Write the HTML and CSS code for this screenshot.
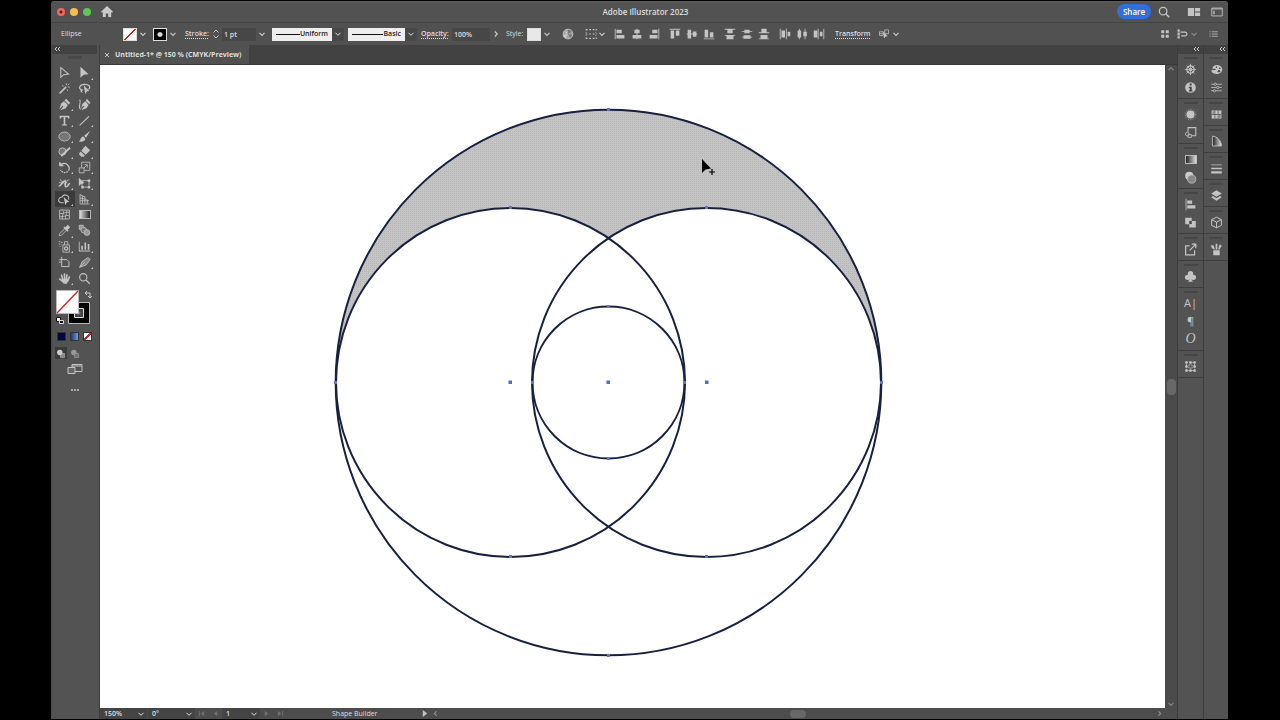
FILE: index.html
```
<!DOCTYPE html>
<html lang="en">
<head>
<meta charset="utf-8">
<title>Adobe Illustrator 2023</title>
<link rel="stylesheet" href="styles.css">
</head>
<body>
<svg class="defs" aria-hidden="true">
  <symbol id="chev" viewBox="0 0 8 8"><path d="M1.5 2.8 4 5.3 6.5 2.8" fill="none" stroke="currentColor" stroke-width="1.2"/></symbol>
  <symbol id="collapse" viewBox="0 0 8 8"><path d="M4 2 2 4l2 2M7 2 5 4l2 2" fill="none" stroke="currentColor"/></symbol>
</svg>
<div class="app">
  <header class="titlebar">
    <div class="title-left">
      <button class="light close" aria-label="Close"></button>
      <button class="light minimize" aria-label="Minimize"></button>
      <button class="light expand" aria-label="Expand"></button>
      <button class="home" aria-label="Home"><svg viewBox="0 0 12 12"><path fill="currentColor" d="M6 0 0 5.7 1 6.8l.8-.7V11h3V7.5h2.4V11h3V6.1l.8.7 1-1.1z"/></svg></button>
    </div>
    <h1 class="app-title">Adobe Illustrator 2023</h1>
    <div class="title-right">
      <button class="share">Share</button>
      <button class="icon" aria-label="Search"><svg viewBox="0 0 16 16" class="line"><circle cx="7" cy="7" r="4.3" stroke-width="1.5"/><path d="m10 10 4 4" stroke-width="1.7"/></svg></button>
      <button class="icon workspace" aria-label="Arrange documents"><svg viewBox="0 0 16 16" class="solid"><path d="M1 3.500h7v9H1zM9 3.500h6v4H9zM9 8.500h6v4H9z"/></svg></button>
      <button class="icon" aria-label="Switch workspace"><svg viewBox="0 0 16 16" class="line"><path d="M2 3.500h12v9H2zM2 4.500h12"/><path d="M4.500 6.500v4" stroke-width="1.5"/></svg></button>
    </div>
  </header>

  <div class="controls">
    <span class="kind">Ellipse</span>
    <button class="drop" aria-label="Fill"><i class="swatch none"></i><svg class="chev"><use href="#chev"/></svg></button>
    <button class="drop" aria-label="Stroke color"><i class="swatch ring"></i><svg class="chev"><use href="#chev"/></svg></button>
    <div class="field">
      <label class="weight-label linked" for="weight">Stroke:</label>
      <button class="stepper" aria-label="Step stroke weight"><svg viewBox="0 0 10 12" class="line"><path d="m2.5 4.500 2.500-2.500 2.500 2.500M2.500 7.500 5 10l2.500-2.500"/></svg></button>
      <input id="weight" class="weight" value="1 pt">
      <button class="drop" aria-label="Stroke weights"><svg class="chev"><use href="#chev"/></svg></button>
    </div>
    <select class="profile" aria-label="Width profile"><option>Uniform</option></select>
    <select class="profile brush" aria-label="Brush"><option>Basic</option></select>
    <div class="field">
      <label class="opacity-label linked" for="opacity">Opacity:</label>
      <input id="opacity" class="opacity" value="100%">
      <button class="drop" aria-label="Opacity options"><svg class="chev side"><use href="#chev"/></svg></button>
    </div>
    <div class="field">
      <span class="style-label">Style:</span>
      <button class="drop" aria-label="Graphic style"><i class="swatch plain"></i><svg class="chev"><use href="#chev"/></svg></button>
    </div>
    <button class="recolor" aria-label="Recolor artwork"><svg viewBox="0 0 16 16"><circle cx="8" cy="8" r="6" fill="#a2a2a2"/><path d="M8 8V2a6 6 0 0 1 5 3zM8 8l6 1a6 6 0 0 1-3 4z" fill="#777"/><path d="m8 8-6 1a6 6 0 0 0 3 4z" fill="#ccc"/><circle cx="8" cy="8" r="5.500" fill="none" stroke="#bbb"/><circle cx="6" cy="6" r="1" fill="#ddd"/></svg></button>
    <button class="drop align-to" aria-label="Align to"><svg viewBox="0 0 16 16" class="line"><path stroke-dasharray="2 2" d="M2 3h13M2 8h13M2 13h13" stroke-width="1.400"/><path stroke-dasharray="1 2" d="M2.500 3v10M13.500 3v10"/></svg><svg class="chev"><use href="#chev"/></svg></button>
    <div class="aligns">
      <button aria-label="Align left"><svg viewBox="0 0 16 16" class="solid"><path d="M2 2h1v12H2zM4 3h6v4H4zM4 9h9v4H4z"/></svg></button>
      <button aria-label="Align center"><svg viewBox="0 0 16 16" class="solid"><path d="M7.500 2h1v12h-1zM5 3h6v4H5zM3 9h10v4H3z"/></svg></button>
      <button aria-label="Align right"><svg viewBox="0 0 16 16" class="solid"><path d="M13 2h1v12h-1zM6 3h6v4H6zM3 9h9v4H3z"/></svg></button>
    </div>
    <div class="aligns">
      <button aria-label="Align top"><svg viewBox="0 0 16 16" class="solid"><path d="M2 2h12v1H2zM3 4h4v9H3zM9 4h4v6H9z"/></svg></button>
      <button aria-label="Align middle"><svg viewBox="0 0 16 16" class="solid"><path d="M2 7.500h12v1H2zM3 3h4v10H3zM9 5h4v6H9z"/></svg></button>
      <button aria-label="Align bottom"><svg viewBox="0 0 16 16" class="solid"><path d="M2 13h12v1H2zM3 3h4v9H3zM9 6h4v6H9z"/></svg></button>
    </div>
    <div class="aligns">
      <button aria-label="Distribute top"><svg viewBox="0 0 16 16" class="solid"><path d="M2 2h12v1H2zM5 3h6v4H5zM2 9h12v1H2zM4 10h8v4H4z"/></svg></button>
      <button aria-label="Distribute middle"><svg viewBox="0 0 16 16" class="solid"><path d="M2 4.500h12v1H2zM5 3h6v4H5zM2 11h12v1H2zM4 9.500h8v4H4z"/></svg></button>
      <button aria-label="Distribute bottom"><svg viewBox="0 0 16 16" class="solid"><path d="M2 6h12v1H2zM5 2h6v4H5zM2 13h12v1H2zM4 9h8v4H4z"/></svg></button>
    </div>
    <div class="aligns">
      <button aria-label="Distribute left"><svg viewBox="0 0 16 16" class="solid"><path d="M2 2h1v12H2zM4 4h4v8H4zM9 2h1v12H9zM11 5.500h3v5h-3z"/></svg></button>
      <button aria-label="Distribute center"><svg viewBox="0 0 16 16" class="solid"><path d="M4.500 2h1v12h-1zM3 4h4v8H3zM11 2h1v12h-1zM9.500 5.500h4v5h-4z"/></svg></button>
      <button aria-label="Distribute right"><svg viewBox="0 0 16 16" class="solid"><path d="M6.500 2h1v12h-1zM2 4h4v8H2zM13 2h1v12h-1zM9 5.500h3v5H9z"/></svg></button>
    </div>
    <button class="transform linked">Transform</button>
    <button class="drop" aria-label="Isolate"><svg viewBox="0 0 16 16" class="glyph"><g class="line"><path d="M2 5h5v5H2zM2 7.500h5M9 2.500h5v5H9z"/></g><path class="solid" d="m7 5 6 6-3 .4L8 14z"/></svg><svg class="chev"><use href="#chev"/></svg></button>
    <div class="controls-end">
      <button aria-label="Grid view"><svg viewBox="0 0 16 16" class="solid"><path d="M3 3h4v4H3zM9 3h4v4H9zM3 9h4v4H3zM9 9h4v4H9z"/></svg></button>
      <button class="drop snap" aria-label="Snap options"><svg viewBox="0 0 16 16" class="glyph"><path class="solid" d="M2 2h3v3H2zM2 6h3v4H2zM2 11h3v3H2z"/><path class="line" stroke-width="1.500" d="M6 5.500h6a2 2 0 0 1 0 5H7"/></svg><svg class="chev"><use href="#chev"/></svg></button>
      <button aria-label="Bar menu"><svg viewBox="0 0 16 16" class="line"><path d="M5 5h8M5 8h8M5 11h8M2 5h1.500M2 8h1.500M2 11h1.500"/></svg></button>
    </div>
  </div>

  <div class="workspace-area">
    <aside class="tools">
      <div class="collapse"><svg><use href="#collapse"/></svg></div>
      <div class="grip"></div>
      <div class="tool-grid">
        <button aria-label="Selection"><svg viewBox="0 0 16 16" class="line"><path d="M3.500 2v12l3.500-3.300 6-.8z" stroke-width="1.300"/></svg></button>
        <button class="more" aria-label="Direct selection"><svg viewBox="0 0 16 16" class="solid"><path d="M3 1v13.500l4-3.700 6-.8z"/></svg></button>
        <button aria-label="Magic wand"><svg viewBox="0 0 16 16" class="line"><path d="m2 14 8-8" stroke-width="2"/><path d="m10 1.500.5 2.500M14.500 6.500 12 6M14 2l-2 2M5 4l2 1.500M11 9l1 2"/></svg></button>
        <button aria-label="Lasso"><svg viewBox="0 0 16 16"><path class="line" stroke-width="1.500" d="M6 10C-1 9 2 3 8 3s8 3 5 6M5 9c-3 2 0 3 0 4"/><path class="solid" d="m7 4 7 7-3 .5L9 15z"/></svg></button>
        <button class="more" aria-label="Pen"><svg viewBox="0 0 16 16"><path class="solid" d="M10 1 15 6l-2 2-5-5zM7.500 4l4.500 4.500-2.500 4L3 15l3.500-4.500L5.500 9.500 1.500 14 4 6.500z"/></svg></button>
        <button aria-label="Curvature"><svg viewBox="0 0 16 16"><path class="solid" d="M11 1 15.500 6l-2 1.500-4-4zM9 4l4 4.500-2.500 4L4 15l3.500-4.500L6.500 9.500 3.500 13 5.500 7z"/><path class="line" d="M2 2c3 4-3 8 1 12" stroke-width="1.300"/></svg></button>
        <button class="more" aria-label="Type"><svg viewBox="0 0 16 16" class="solid"><path d="M2 2h12v3.500h-1.500L12 4H9v8.500l2 .5v1H5v-1l2-.5V4H4l-.5 1.500H2z"/></svg></button>
        <button class="more" aria-label="Line segment"><svg viewBox="0 0 16 16" class="line"><path d="M2 14 13.500 3" stroke-width="1.400"/></svg></button>
        <button class="more" aria-label="Ellipse"><svg viewBox="0 0 16 16" class="line"><ellipse cx="8" cy="8" rx="7" ry="5.500" fill="#777"/></svg></button>
        <button class="more" aria-label="Paintbrush"><svg viewBox="0 0 16 16" class="solid"><path d="M15 1 7.500 7 10 9.500zM6.500 8l2.500 2.500c0 3.500-4.500 4.500-8 3.500 2.500-1 2-6 5.500-6z"/></svg></button>
        <button class="more" aria-label="Shaper"><svg viewBox="0 0 16 16" class="line"><circle cx="5.500" cy="8" r="4.500" fill="#777"/><path d="M4 13.500c2-1 7-8 11-10" stroke-width="2.500"/></svg></button>
        <button class="more" aria-label="Eraser"><svg viewBox="0 0 16 16" class="solid"><path d="m9 1 6 5.500L9.500 12 4 7z"/><path d="m3.200 8 5.200 4.800L7 14.500H4L1 11z"/></svg></button>
        <button class="more" aria-label="Rotate"><svg viewBox="0 0 16 16" class="line"><path d="M4 4.500a6 6 0 0 1 9 7.500" stroke-width="1.500"/><path d="M12 13a6 6 0 0 1-9-2" stroke-width="1.500" stroke-dasharray="2 1"/><path d="M2 1.500V6h4.500z" fill="currentColor"/></svg></button>
        <button class="more" aria-label="Scale"><svg viewBox="0 0 16 16" class="line"><path d="M1.500 8.500h6v6h-6zM4.500 8V1.500h10v10H8M7 9l4-4M8 4.500h3.500V8"/></svg></button>
        <button class="more" aria-label="Width"><svg viewBox="0 0 16 16" class="line"><path d="M1 11c3 1 4-6 7-6s-1 7 2 7 2-4 5-4" stroke-width="2"/><path d="M3 3c1 4 4 2 5 6M9 3l2 5M1 7h4M11 5l3-2"/></svg></button>
        <button class="more" aria-label="Free transform"><svg viewBox="0 0 16 16"><path class="line" d="M5 4.500h8.500v8H5z"/><path class="solid" d="M1 1v10l3-2.500 4-1zM12 3h3v3h-3zM12 11h3v3h-3zM4 11h3v3H4z"/></svg></button>
        <button class="more active" aria-label="Shape builder"><svg viewBox="0 0 16 16"><path class="line" d="M7 12C-2 13 0 5 5 5c2-5 10-2 8 3" fill="#555" stroke-width="1.300"/><path class="solid" d="m7 5 7 6-3 .5L9 15z"/></svg></button>
        <button class="more" aria-label="Perspective grid"><svg viewBox="0 0 16 16" class="line"><path d="M2.500 1.500v12H14M5.500 3v10M8.500 4v9M2.500 2l6 3M2.500 6l8 2M2.500 9.500h11M11.500 8v5"/></svg></button>
        <button aria-label="Mesh"><svg viewBox="0 0 16 16" class="line"><path d="M2 2.500h12v11H2zM6 3c3 4-3 7 0 11M10 3c3 4-3 7 0 11M2 6c4 3 8-3 12 0M2 10c4 3 8-3 12 0"/></svg></button>
        <button aria-label="Gradient"><i class="ramp"></i></button>
        <button class="more" aria-label="Eyedropper"><svg viewBox="0 0 16 16"><path class="solid" d="m9 4 3-3 3 3-3 3 1 1-1.500 1.500L6.500 4.500 8 3z"/><path class="line" d="m8 6-6 6-.5 2.500L4 14l6-6"/></svg></button>
        <button aria-label="Blend"><svg viewBox="0 0 16 16" class="line"><path d="M1.500 1.500h5v5h-5z" fill="#999"/><circle cx="7" cy="7.500" r="3.500" fill="#777"/><circle cx="11" cy="10.500" r="3.500" fill="#999"/></svg></button>
        <button class="more" aria-label="Symbol sprayer"><svg viewBox="0 0 16 16" class="line"><path d="M6 6h8v9H6zM8 6V2h4v4M1 2h2M4 3h2M1 5h2M4 6h1M2 8h1"/><circle cx="10" cy="10.500" r="2" stroke-width="1.500"/></svg></button>
        <button class="more" aria-label="Column graph"><svg viewBox="0 0 16 16" class="solid"><path d="M1 2h1v11h13v1H1zM4 7h2v5H4zM8 3h2v9H8zM12 5h2v7h-2z"/></svg></button>
        <button aria-label="Artboard"><svg viewBox="0 0 16 16" class="line"><path d="M4.500 1v12h9V7L11 4.500H1.500M1 7.500h3" stroke-width="1.200"/></svg></button>
        <button class="more" aria-label="Slice"><svg viewBox="0 0 16 16" class="line"><path d="m2 14 3-7 7-5 3 2-5 7z" fill="#888"/><path d="m2 14 6-6"/></svg></button>
        <button class="more" aria-label="Hand"><svg viewBox="0 0 16 16"><path class="line" d="M6 10 4.500 4M8 9V2.500M10 10l1-6.500M12 11l2-5M6 12 2 8.500" stroke-width="1.900" stroke-linecap="round"/><path class="solid" d="m4 9 9-1-2 6.500H7z"/></svg></button>
        <button aria-label="Zoom"><svg viewBox="0 0 16 16" class="line"><circle cx="6.500" cy="6.500" r="4.500" stroke-width="1.300"/><path d="m10 10 4.500 4.500" stroke-width="1.700"/></svg></button>
      </div>
      <div class="paint">
        <svg viewBox="0 0 40 38" role="img" aria-label="Fill and stroke">
          <path d="M14.500 15.500h21v21h-21z" fill="#000" stroke="#bbb"/><path d="M20.500 21.500h9v9h-9z" fill="#444" stroke="#ddd"/><path d="M23.500 24.500h3v3h-3z" fill="#777"/>
          <path d="M2.500 3.500h22v23h-22z" fill="#fff" stroke="#bbb"/><path d="m3 26 21-22" stroke="#c52828" stroke-width="1.400"/>
          <path d="M31 6h5v5M33 4l-2 2 2 2M34 9l2 2 2-2" fill="none" stroke="#ccc"/>
          <path d="M2.500 30.500h4v4h-4z" fill="#fff" stroke="#111"/><path d="M5.500 33.500h4v3h-4z" fill="#111" stroke="#ddd"/>
        </svg>
      </div>
      <div class="chips">
        <button class="chip navy" aria-label="Color"></button><button class="chip blue" aria-label="Gradient"></button><button class="chip none" aria-label="None"></button>
      </div>
      <div class="modes">
        <button class="active" aria-label="Draw normal"><svg viewBox="0 0 16 16"><path d="M8 8h6v6H8z" fill="#888" stroke="#aaa"/><circle cx="7" cy="6.500" r="4" fill="#ccc"/></svg></button>
        <button aria-label="Draw behind"><svg viewBox="0 0 16 16"><circle cx="7" cy="6.500" r="4" fill="#999"/><path d="M8 8h6v6H8z" fill="#777" stroke="#999"/></svg></button>
      </div>
      <button class="screen-mode" aria-label="Screen mode"><svg viewBox="0 0 16 12" class="line"><path d="M5 1.500h10v7H5zM5 3h10"/><path d="M1 4.500h7v6H1z" fill="#666"/></svg></button>
      <button class="edit-tools" aria-label="Edit toolbar"><svg viewBox="0 0 10 4" class="solid"><circle cx="2" cy="2" r="1"/><circle cx="5" cy="2" r="1"/><circle cx="8" cy="2" r="1"/></svg></button>
    </aside>

    <main class="document">
      <div class="tabs"><div class="tab"><button aria-label="Close tab"><svg viewBox="0 0 8 8" class="line"><path d="m2 2 4 4M6 2 2 6"/></svg></button><span>Untitled-1* @ 150 % (CMYK/Preview)</span></div></div>
      <div class="canvas">
        <svg viewBox="0 0 1065 643" role="img" aria-label="Overlapping circles">
          <defs><pattern id="mesh" width="2" height="2" patternUnits="userSpaceOnUse"><path fill="#c4c4c4" d="M0 0h2v2H0z"/><path fill="#b6b6b6" d="M0 0h1v1H0z"/></pattern></defs>
          <path fill="url(#mesh)" d="M235.500 317A273 273 0 0 1 781.500 317A174.500 174.500 0 0 0 508.500 173A174.500 174.500 0 0 0 235.500 317"/>
          <g fill="none" stroke="#18203f" stroke-width="2">
            <circle cx="508.500" cy="317.500" r="272.800"/><circle cx="410.500" cy="317.500" r="174.500"/><circle cx="606.500" cy="317.500" r="174.500"/><circle cx="508.500" cy="317.500" r="76"/>
          </g>
          <path fill="#4f71c4" d="M408.500 315.500h3.500v3.500h-3.500zM506.500 315.500h3.500v3.500h-3.500zM605 315.500h3.500v3.500H605z"/>
          <path fill="#6274bd" d="M507 43h3v3h-3zM507 589h3v3h-3zM409 141h3v3h-3zM605 141h3v3h-3zM409 490h3v3h-3zM605 490h3v3h-3zM507 240h3v3h-3zM507 392h3v3h-3zM234 316h3v3h-3zM780 316h3v3h-3zM431 316h3v3h-3zM583 316h3v3h-3z"/>
          <path d="M602 94v14l3.500-3.500 5.500-1z" fill="#000"/><path d="M609 107h6M612 104v6" stroke="#000" stroke-width="1.200"/>
        </svg>
      </div>
      <div class="vscroll"><svg class="chev up"><use href="#chev"/></svg><i class="thumb"></i><svg class="chev"><use href="#chev"/></svg></div>
      <footer class="status">
        <select class="zoom" aria-label="Zoom"><option>150%</option></select>
        <select class="rotate" aria-label="Rotate view"><option>0°</option></select>
        <div class="pager"><button aria-label="First"><svg viewBox="0 0 8 8" class="solid"><path d="M1 1h1v6H1zM7 1v6L3 4z"/></svg></button><button aria-label="Previous"><svg viewBox="0 0 8 8" class="solid"><path d="M6 1v6L2 4z"/></svg></button></div>
        <select class="board" aria-label="Artboard"><option>1</option></select>
        <div class="pager"><button aria-label="Next"><svg viewBox="0 0 8 8" class="solid"><path d="M2 1v6l4-3z"/></svg></button><button aria-label="Last"><svg viewBox="0 0 8 8" class="solid"><path d="M1 1v6l4-3zM6 1h1v6H6z"/></svg></button></div>
        <span class="tool-name">Shape Builder</span>
        <button class="play" aria-label="Status menu"><svg viewBox="0 0 8 8" class="solid"><path d="M2 0v8l5-4z"/></svg></button>
        <div class="hscroll"><svg class="chev back"><use href="#chev"/></svg><i class="thumb"></i><svg class="chev side"><use href="#chev"/></svg></div>
      </footer>
    </main>

    <aside class="dock">
      <div class="collapse"><svg><use href="#collapse"/></svg></div>
      <div class="panel">
        <button aria-label="Properties"><svg viewBox="0 0 16 16" class="line"><circle cx="8" cy="8" r="4.500" stroke-width="1.500"/><circle cx="8" cy="8" r="1.500"/><path d="M8 1v14M1 8h14M3 3l10 10M13 3 3 13"/></svg></button>
        <button aria-label="Info"><svg viewBox="0 0 16 16"><circle class="solid" cx="8" cy="8" r="6.500"/><path d="M7 3h2.500v2.500H7zM6 7h3.500v4.500h1V13H6v-1.500h1v-3H6z" fill="#444"/></svg></button>
      </div>
      <div class="panel">
        <button aria-label="Appearance"><svg viewBox="0 0 16 16"><circle class="solid" cx="8" cy="8" r="5"/><circle class="line" cx="8" cy="8" r="6.500" stroke-dasharray="1 2"/></svg></button>
        <button aria-label="Asset export"><svg viewBox="0 0 16 16" class="line"><path d="M5 7V2h9.500v10H9" stroke-width="1.300"/><circle cx="4" cy="10" r="2.300"/><path d="M5 10.500h4V14H5z"/></svg></button>
      </div>
      <div class="panel">
        <button aria-label="Gradient"><i class="ramp"></i></button>
        <button aria-label="Transparency"><svg viewBox="0 0 16 16"><circle cx="6.500" cy="6" r="5" fill="#ccc"/><circle cx="9.500" cy="10" r="5" fill="#888" stroke="#bbb"/></svg></button>
      </div>
      <div class="panel">
        <button aria-label="Align"><svg viewBox="0 0 16 16" class="solid"><path d="M2 1h1v14H2zM4 3h6v4H4zM4 9h10v4H4z"/></svg></button>
        <button aria-label="Pathfinder"><svg viewBox="0 0 16 16"><path class="solid" d="M1.500 2h8v4h5v8h-8v-4h-5z"/><path d="M6.500 6h3v4h-3z" fill="#444"/></svg></button>
      </div>
      <div class="panel"><button aria-label="Export"><svg viewBox="0 0 16 16" class="line"><path d="M7 3.500H2v11h11V9M7 9l7-7M9.500 1.500h5v5" stroke-width="1.500"/></svg></button></div>
      <div class="panel"><button aria-label="Symbols"><svg viewBox="0 0 16 16" class="solid"><circle cx="8" cy="4.500" r="3.300"/><circle cx="4.500" cy="9" r="3.300"/><circle cx="11.500" cy="9" r="3.300"/><path d="M7 7h2l.5 5 1.500 2.500H5L6.500 12z"/></svg></button></div>
      <div class="panel letters">
        <button class="letter" aria-label="Character">A|</button>
        <button class="letter" aria-label="Paragraph">¶</button>
        <button class="letter opentype" aria-label="OpenType">O</button>
      </div>
      <div class="panel"><button aria-label="Transform"><svg viewBox="0 0 16 16" class="line"><path d="M3 3h10v10H3zM6 6h4v4H6z" stroke-dasharray="2 1"/><path class="solid" d="M2 2h2v2H2zM7 2h2v2H7zM12 2h2v2h-2zM2 7h2v2H2zM12 7h2v2h-2zM2 12h2v2H2zM7 12h2v2H7zM12 12h2v2h-2z"/></svg></button></div>
    </aside>
    <aside class="dock">
      <div class="collapse"><svg><use href="#collapse"/></svg></div>
      <div class="panel">
        <button aria-label="Color"><svg viewBox="0 0 16 16"><path class="solid" d="M8 2.500c4 0 7 2 7 5.500s-3 5.500-7 5.500S1 11 2 9s4 1 5-1-5 0-4-2 3-3.500 5-3.500z"/><circle cx="8" cy="5" r="1" fill="#444"/><circle cx="12" cy="6.500" r="1" fill="#444"/><circle cx="11" cy="10" r="1.500" fill="#444"/></svg></button>
        <button aria-label="Color guide"><svg viewBox="0 0 16 16" class="line"><path d="M1.500 4H5M8 4h6.500M1.500 8h6.500M11 8h3.500M1.500 12H4M7 12h7.500"/><circle cx="6.500" cy="4" r="1.400"/><circle cx="9.500" cy="8" r="1.400"/><circle cx="5.500" cy="12" r="1.400"/></svg></button>
      </div>
      <div class="panel"><button aria-label="Swatches"><svg viewBox="0 0 16 16"><path class="solid" d="M2 3h12v10H2z"/><path d="M2 8h12M6 3v10M10 3v10" stroke="#555"/><path d="M3 4h2v3H3zM11 9h2v3h-2z" fill="#888"/></svg></button></div>
      <div class="panel"><button aria-label="Gradient fan"><svg viewBox="0 0 16 16"><defs><linearGradient id="fan"><stop stop-color="#222"/><stop offset="1" stop-color="#ddd"/></linearGradient></defs><path d="M3 1.500c6 0 11 6 11 12H3z" fill="url(#fan)" stroke="#ccc"/></svg></button></div>
      <div class="panel"><button aria-label="Stroke"><svg viewBox="0 0 16 16" class="solid"><path d="M1.500 3h13v1h-13zM1.500 7h13v2h-13zM1.500 11.500h13V14h-13z"/></svg></button></div>
      <div class="panel"><button aria-label="Layers"><svg viewBox="0 0 16 16" class="solid"><path d="m8 1.500 6.500 4L8 9.500l-6.500-4zM3.500 8.500 8 11.300l4.500-2.800 2 1.500L8 14.500 1.500 10z"/></svg></button></div>
      <div class="panel"><button aria-label="3D"><svg viewBox="0 0 16 16" class="line"><path d="m8 1.500 6 3v7l-6 3-6-3v-7zM2 4.500l6 3 6-3M8 7.500v7" stroke-width="1.200"/></svg></button></div>
      <div class="panel"><button aria-label="Brushes"><svg viewBox="0 0 16 16" class="solid"><path d="M4 9h8v6H4zM7 1h2v7H7zM1.500 2.500l3 .5L6 8H5L2 6zM12 1.500l2.500 2-3 4.500H10z"/></svg></button></div>
    </aside>
  </div>
</div>
</body>
</html>
```

FILE: styles.css
```
* { box-sizing: border-box; }
body { margin: 0; background: #000; color: #dedede; font: 7px/10px "Open Sans", "Noto Sans", sans-serif; }
button, input, select { font: inherit; color: inherit; border: 0; padding: 0; margin: 0; background: none; border-radius: 0; outline: 0; }
button { display: flex; align-items: center; justify-content: center; flex: none; }
input { min-width: 0; background: #474747; }
select { appearance: none; }
svg { display: block; flex: none; width: 14px; height: 14px; color: #cacaca; }
.defs { position: absolute; width: 0; height: 0; }
.line { fill: none; stroke: #c4c4c4; }
.solid { fill: #c4c4c4; }
.chev { width: 8px; height: 8px; margin: 0 2px; }
.chev.side { transform: rotate(-90deg); }
.chev.back { transform: rotate(90deg); }
.chev.up { transform: rotate(180deg); }

.app { height: 100vh; margin: 0 52px 0 51px; padding: 1px 0; display: flex; flex-direction: column; }
.titlebar { height: 22px; flex: none; display: grid; grid-template-columns: 1fr auto 1fr; align-items: center; padding: 0 3px 1px 6px; background: #525252; border-top: 1px solid #606060; border-bottom: 1px solid #444; border-radius: 3px 3px 0 0; }
.title-left, .title-right { display: flex; align-items: center; }
.title-left { gap: 5px; }
.title-right { justify-content: flex-end; }
.light { width: 8px; height: 8px; border-radius: 50%; }
.close { background: radial-gradient(circle, #7c1512 0 1px, #ec6a5f 2px); }
.minimize { background: #f4bf50; }
.expand { background: #61c455; }
.home { margin-left: 5px; }
.home svg { width: 12px; height: 12px; }
.app-title { margin: 0; padding-left: 9px; font-size: 8px; font-weight: 600; }
.share { width: 34px; height: 15px; border-radius: 8px; background: #2f70dc; color: #fff; font-size: 8px; font-weight: 600; margin-right: 5px; }
.icon { width: 16px; }
.icon + .icon { margin-left: 7px; }
.icon + .workspace { margin-left: 14px; }

.controls { height: 22px; flex: none; display: flex; align-items: center; gap: 4px; padding: 0 7px 0 10px; background: #515151; }
.kind { width: 58px; }
.field { display: flex; align-items: center; }
.field input { height: 13px; padding: 0 2px; font-weight: 600; }
.linked { text-decoration: underline dotted 1px; text-underline-offset: 2px; font-weight: 600; }
.swatch { width: 14px; height: 13px; background: #fff; border: 1px solid #ddd; }
.none { background: linear-gradient(135deg, #fff 45%, #c52828 46% 54%, #fff 55%); }
.ring { background: radial-gradient(#ddd 0 2px, #000 3px); }
.plain { background: #e8e8e8; }
.weight-label { width: 27px; padding-left: 2px; }
.stepper { width: 12px; }
.stepper svg { width: 10px; height: 12px; }
.weight { width: 34px; }
.opacity-label { width: 31px; }
.opacity { width: 38px; }
.style-label { width: 21px; }
.profile { width: 72px; height: 13px; padding-right: 16px; text-align: right; text-align-last: right; color: #222; font-weight: 600;
  background:
    url("data:image/svg+xml,%3Csvg xmlns='http://www.w3.org/2000/svg' width='8' height='8'%3E%3Cpath d='M1.5 2.8 4 5.3 6.5 2.8' fill='none' stroke='%23ddd'/%3E%3C/svg%3E") right 2px center no-repeat,
    linear-gradient(#111, #111) 4px 6px / 24px 1px no-repeat,
    linear-gradient(#eee, #eee) 0 0 / calc(100% - 12px) 100% no-repeat #484848; }
.brush { width: 69px; background-size: auto, 31px 1px, calc(100% - 12px) 100%; }
.recolor { width: 22px; }
.align-to { width: 24px; }
.align-to .chev { margin: 0; }
.aligns { display: flex; }
.aligns button { width: 17px; }
.transform { padding: 0 4px; }
.glyph { width: 12px; height: 12px; }
.controls-end { display: flex; gap: 4px; margin-left: auto; }
.controls-end svg { height: 12px; }
.controls-end .chev { height: 8px; color: #888; }
.snap { margin-right: 3px; }

.workspace-area { flex: 1; min-height: 0; display: flex; background: #535353; }
.collapse { height: 9px; background: #424242; padding-left: 1px; }
.collapse svg { width: 8px; height: 8px; }
.tools { width: 49px; flex: none; padding-right: 2px; border-right: 1px solid #3d3d3d; border-left: 1px solid #484848; display: flex; flex-direction: column; align-items: center; }
.tools .collapse { width: 100%; }
.grip { width: 14px; height: 3px; margin: 2px 0 6px; background: #494949; }
.tool-grid { height: 221px; display: grid; grid-template-columns: 20px 20px; grid-template-rows: repeat(14, 1fr); }
.tool-grid button { position: relative; min-height: 0; }
.tool-grid svg { width: 13px; height: 13px; }
.more::after { content: ""; position: absolute; right: 2px; bottom: 1px; border: 1px solid; border-color: transparent #ccc #ccc transparent; }
.active { background: #3b3b3b; }
.ramp { width: 12px; height: 9px; border: 1px solid #bbb; background: linear-gradient(90deg, #222, #ddd); }
.tool-grid .ramp { background: linear-gradient(90deg, #ddd, #222); }
.paint svg { width: 40px; height: 38px; }
.paint { margin: 1px 2px 0 0; }
.chips { display: flex; gap: 4px; margin-top: 7px; }
.chip { width: 9px; height: 9px; border: 1px solid #333; }
.navy { background: #05063f; }
.blue { background: linear-gradient(90deg, #173a7c, #6aa0dd); }
.chip.none { background: linear-gradient(135deg, #fff 40%, #c52828 41% 59%, #fff 60%); }
.modes { display: flex; gap: 2px; margin: 6px 14px 0 0; }
.modes button { width: 12px; height: 12px; }
.modes svg { width: 11px; height: 11px; }
.modes + .screen-mode { margin-top: 4px; }
.screen-mode svg { width: 16px; height: 12px; }
.edit-tools { margin-top: 13px; }
.edit-tools svg { width: 10px; height: 4px; }

.document { flex: 1; min-width: 0; display: grid; grid-template: 20px minmax(0, 1fr) 11px / minmax(0, 1fr) 12px; border-right: 1px solid #3d3d3d; }
.tabs { grid-column: 1 / -1; display: flex; background: #424242; border-bottom: 1px solid #373737; }
.tab { display: flex; align-items: center; gap: 4px; padding: 0 8px 0 3px; background: #515151; font-weight: 700; white-space: nowrap; }
.tab svg { width: 8px; height: 8px; }
.canvas { background: #fff; }
.canvas svg { width: 100%; height: 100%; }
.vscroll { background: #4b4b4b; display: flex; flex-direction: column; align-items: center; justify-content: space-between; }
.vscroll .chev { color: #888; }
.vscroll .thumb { width: 9px; height: 16px; border-radius: 4px; background: #686868; }
.status { grid-column: 1 / -1; display: flex; align-items: center; background: #4d4d4d; }
.status select { height: 11px; padding: 0 4px; font-weight: 600;
  background: url("data:image/svg+xml,%3Csvg xmlns='http://www.w3.org/2000/svg' width='8' height='8'%3E%3Cpath d='M1.5 2.8 4 5.3 6.5 2.8' fill='none' stroke='%23ddd'/%3E%3C/svg%3E") right 2px center no-repeat #444; }
.status svg { width: 7px; height: 7px; }
.status .zoom { width: 47px; }
.status .rotate { width: 47px; margin-left: 1px; }
.status .board { width: 38px; }
.pager { width: 27px; display: flex; justify-content: space-around; }
.pager .solid { fill: #707070; }
.tool-name { flex: none; width: 134px; padding-left: 45px; white-space: nowrap; }
.hscroll { flex: 1; display: flex; align-items: center; justify-content: space-between; padding: 0 12px 0 2px; }
.hscroll .thumb { width: 16px; height: 8px; border-radius: 4px; background: #686868; }
.hscroll .chev { color: #999; }

.dock { width: 26px; flex: none; border-right: 1px solid #3d3d3d; }
.dock:last-child { width: 24px; border-right: 0; }
.dock .collapse { padding-left: 14px; }
.panel { padding: 6px 0 2px; border-bottom: 1px solid #3f3f3f; background: linear-gradient(#464646, #464646) center 3px / 14px 2px no-repeat; }
.panel button { width: 100%; height: 18px; }
.panel svg { width: 13px; height: 13px; }
.letters { color: #c4c4c4; }
.panel .letter { font-size: 11px; line-height: 18px; }
.panel .opentype { font-family: "Liberation Serif", serif; font-style: italic; font-size: 14px; }
```
